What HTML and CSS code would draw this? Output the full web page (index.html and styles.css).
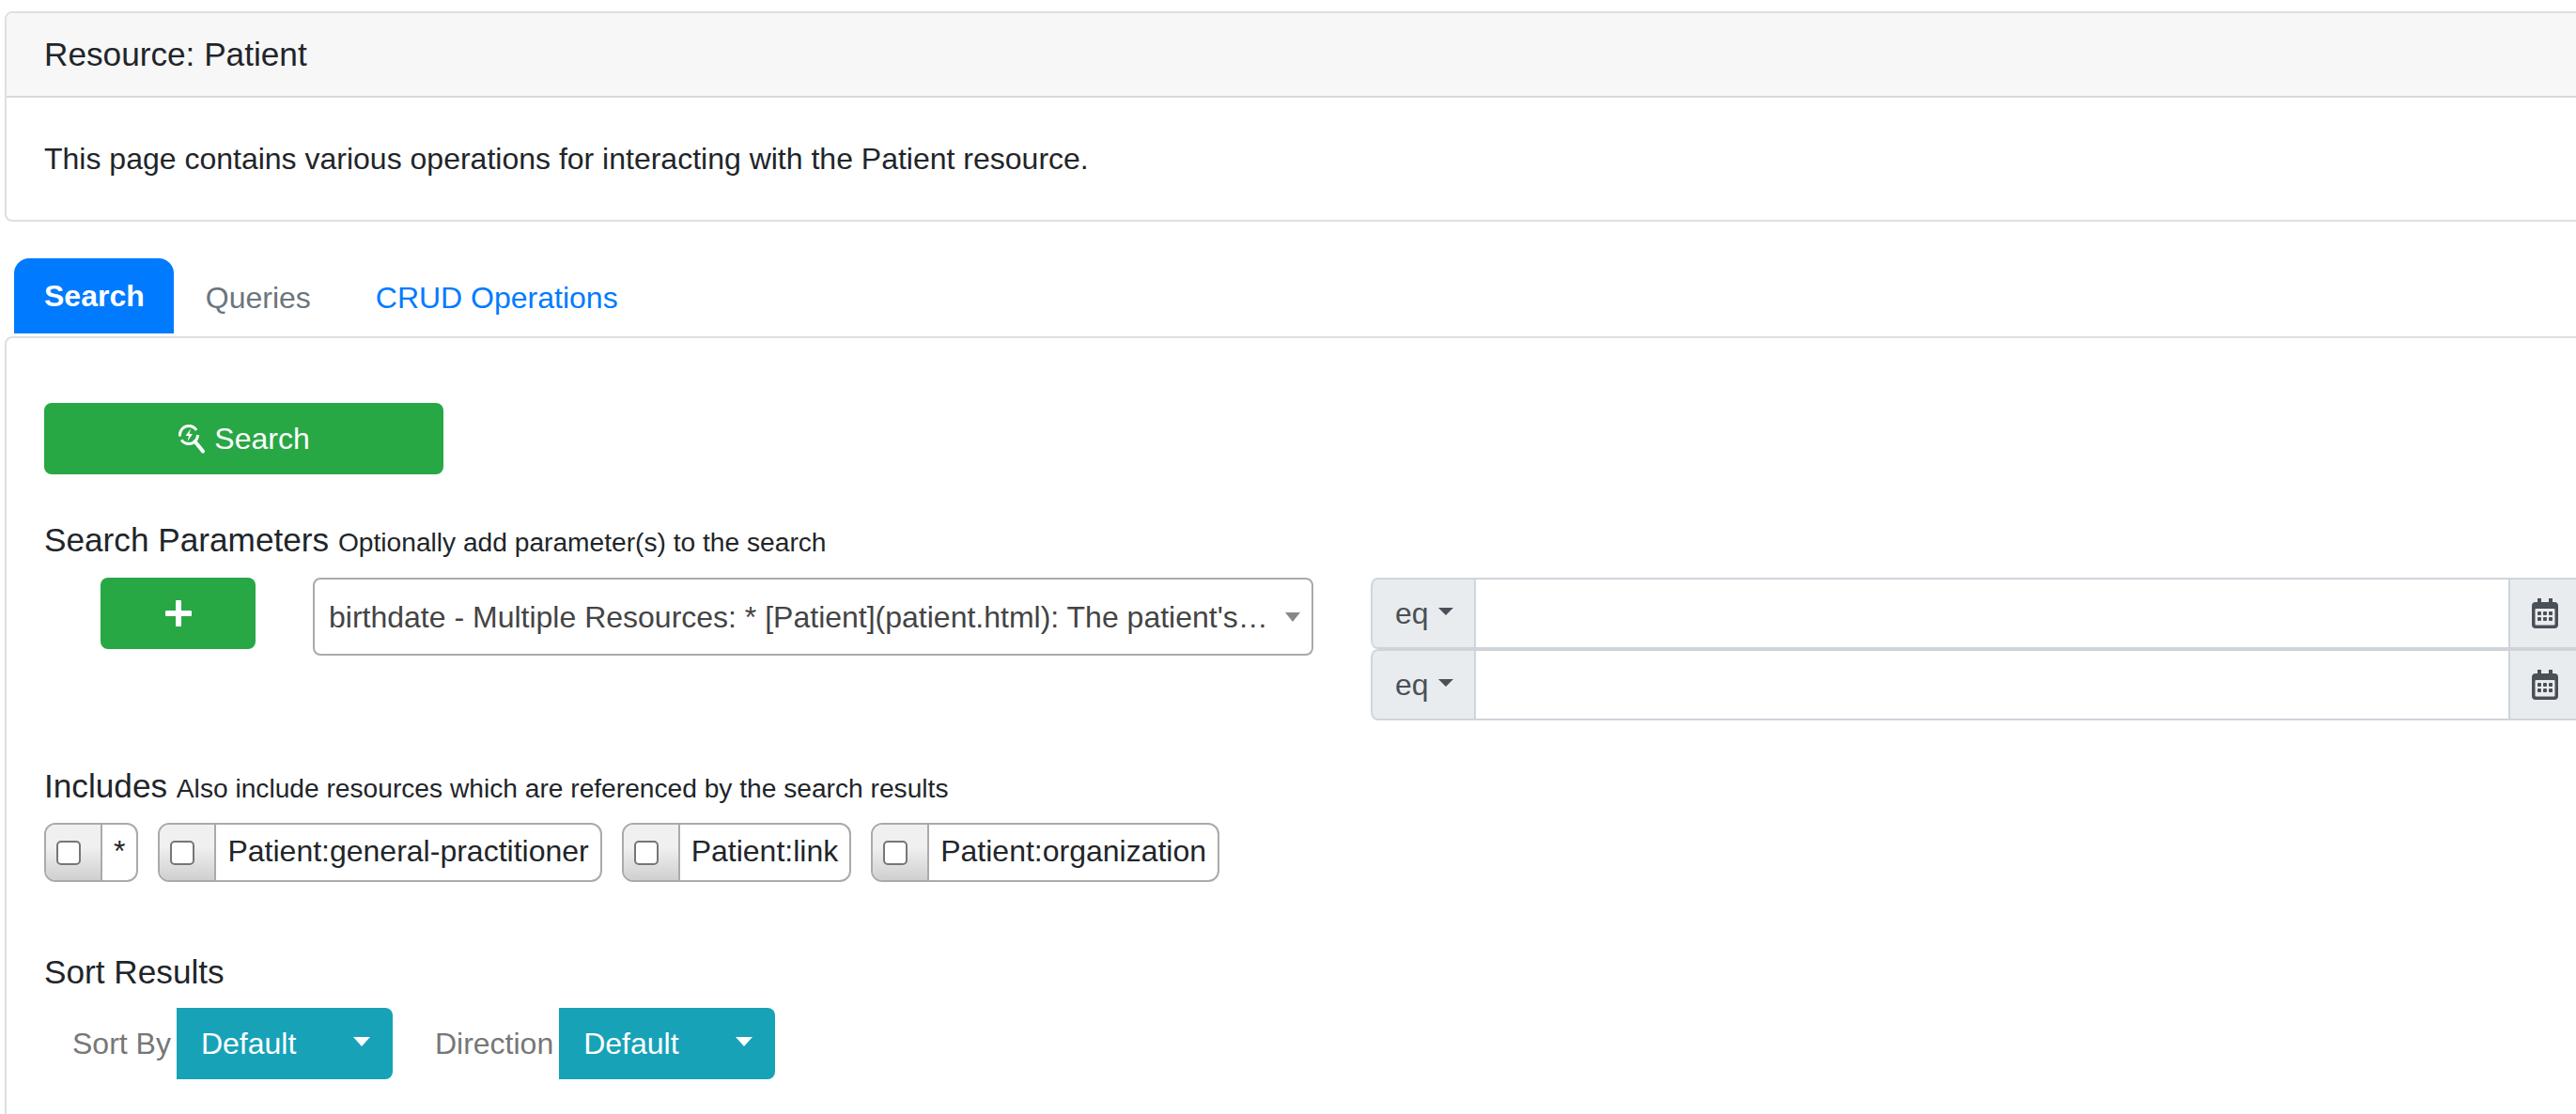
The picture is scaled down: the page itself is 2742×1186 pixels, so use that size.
FILE: index.html
```html
<!DOCTYPE html>
<html lang="en">
  <head>
    <meta charset="UTF-8" />
    <title>Resource: Patient</title>
    <link rel="stylesheet" href="styles.css">
  </head>
  <body>
    <div class="page">
      <div class="card">
        <div class="card-header">Resource: Patient</div>
        <div class="card-body">This page contains various operations for interacting with the Patient resource.</div>
      </div>

      <div class="tabs">
        <a class="tab active" href="#">Search</a>
        <a class="tab muted" href="#">Queries</a>
        <a class="tab" href="#">CRUD Operations</a>
      </div>

      <div class="tab-content">
        <button class="btn btn-search">
          <svg class="search-icon" viewBox="0 0 30 32" width="30" height="32">
            <circle cx="12" cy="12" r="9.5" fill="none" stroke="#fff" stroke-width="3" stroke-dasharray="24 4 26 6"/>
            <path d="M14 5.5 8.5 13h3.5l-1.5 6 5.5-8h-3.5z" fill="#fff"/>
            <path d="M18.500 19 27 29.500" stroke="#fff" stroke-width="4" stroke-linecap="round"/>
          </svg>
          Search
        </button>

        <div class="heading first">Search Parameters <small>Optionally add parameter(s) to the search</small></div>
        <div class="param-row">
          <button class="btn btn-add">
            <svg viewBox="0 0 28 28" width="28" height="28">
              <path d="M14 2v24M2 14h24" stroke="#fff" stroke-width="6" stroke-linecap="round"/>
            </svg>
          </button>
          <div class="select">
            <span class="select-text">birthdate - Multiple Resources: * [Patient](patient.html): The patient's…</span>
            <span class="select-arrow"></span>
          </div>
          <div class="date-groups">
            <div class="date-group">
              <div class="prefix">eq <span class="caret"></span></div>
              <input class="date-input" type="text" />
              <div class="cal">
                <svg viewBox="0 0 28 32" width="28" height="32">
                  <path d="M6 0h4v4h8V0h4v4h2a4 4 0 0 1 4 4v20a4 4 0 0 1-4 4H4a4 4 0 0 1-4-4V8a4 4 0 0 1 4-4h2z" fill="#495057"/>
                  <rect x="3.500" y="11" width="21" height="17.500" rx="1" fill="#e9ecef"/>
                  <g fill="#495057">
                    <rect x="6" y="14" width="4" height="4" rx="1"/><rect x="12" y="14" width="4" height="4" rx="1"/><rect x="18" y="14" width="4" height="4" rx="1"/>
                    <rect x="6" y="20" width="4" height="4" rx="1"/><rect x="12" y="20" width="4" height="4" rx="1"/><rect x="18" y="20" width="4" height="4" rx="1"/>
                  </g>
                </svg>
              </div>
            </div>
            <div class="date-group">
              <div class="prefix">eq <span class="caret"></span></div>
              <input class="date-input" type="text" />
              <div class="cal">
                <svg viewBox="0 0 28 32" width="28" height="32">
                  <path d="M6 0h4v4h8V0h4v4h2a4 4 0 0 1 4 4v20a4 4 0 0 1-4 4H4a4 4 0 0 1-4-4V8a4 4 0 0 1 4-4h2z" fill="#495057"/>
                  <rect x="3.500" y="11" width="21" height="17.500" rx="1" fill="#e9ecef"/>
                  <g fill="#495057">
                    <rect x="6" y="14" width="4" height="4" rx="1"/><rect x="12" y="14" width="4" height="4" rx="1"/><rect x="18" y="14" width="4" height="4" rx="1"/>
                    <rect x="6" y="20" width="4" height="4" rx="1"/><rect x="12" y="20" width="4" height="4" rx="1"/><rect x="18" y="20" width="4" height="4" rx="1"/>
                  </g>
                </svg>
              </div>
            </div>
          </div>
        </div>

        <div class="heading includes">Includes <small>Also include resources which are referenced by the search results</small></div>
        <div class="chips">
          <label class="chip"><span class="chip-check"><input type="checkbox" /></span><span class="chip-label star">*</span></label>
          <label class="chip"><span class="chip-check"><input type="checkbox" /></span><span class="chip-label">Patient:general-practitioner</span></label>
          <label class="chip"><span class="chip-check"><input type="checkbox" /></span><span class="chip-label">Patient:link</span></label>
          <label class="chip"><span class="chip-check"><input type="checkbox" /></span><span class="chip-label">Patient:organization</span></label>
        </div>

        <div class="heading sort">Sort Results</div>
        <div class="sort-row">
          <span class="sort-label">Sort By</span>
          <button class="dropdown">Default <span class="caret white"></span></button>
          <span class="sort-label second">Direction</span>
          <button class="dropdown">Default <span class="caret white"></span></button>
        </div>
      </div>
    </div>
  </body>
</html>
```

FILE: styles.css
```css
html,
body {
  margin: 0;
  height: 1186px;
  overflow: hidden;
  background: #fff;
}
body {
  font-family: "Liberation Sans", Arial, sans-serif;
  font-size: 32px;
  line-height: 48px;
  color: #212529;
}
.page {
  width: 2800px;
  padding: 12px 0 0 5px;
}
.card {
  border: 2px solid #dfdfdf;
  border-radius: 8px;
}
.card-header {
  background: #f7f7f7;
  border-bottom: 2px solid #d9d9d9;
  border-radius: 6px 6px 0 0;
  padding: 20px 40px 20px;
  font-size: 35.2px;
}
.card-body {
  padding: 41px 40px 41px;
  height: 48px;
}
.tabs {
  display: flex;
  margin: 39px 0 0 10px;
  height: 80px;
}
.tab {
  padding: 18px 35px 14px 34px;
  height: 48px;
  color: #007bff;
  text-decoration: none;
}
.tab.active {
  background: #007bff;
  color: #fff;
  font-weight: bold;
  border-radius: 16px 16px 0 0;
  padding: 16px 31px 16px 32px;
  height: 48px;
}
.tab.muted {
  color: #6c757d;
}
.tab-content {
  margin-top: 3px;
  border: 2px solid #dfdfdf;
  border-radius: 8px 8px 0 0;
  padding: 69px 40px 60px;
}
.btn {
  display: flex;
  align-items: center;
  justify-content: center;
  background: #28a745;
  color: #fff;
  border: 0;
  border-radius: 8px;
  font: inherit;
  height: 76px;
  padding: 0;
}
.btn-search {
  width: 425px;
  gap: 9px;
}
.heading {
  height: 48px;
  font-size: 35.2px;
}
.heading small {
  font-size: 28.16px;
}
.heading.first {
  margin-top: 46px;
}
.param-row {
  display: flex;
  align-items: flex-start;
  margin-top: 16px;
  padding-left: 60px;
}
.btn-add {
  width: 165px;
  flex: none;
}
.select {
  display: flex;
  align-items: center;
  flex: none;
  box-sizing: border-box;
  width: 1065px;
  height: 83px;
  margin-left: 61px;
  padding: 0 12px 0 15px;
  border: 2px solid #aaa;
  border-radius: 8px;
  color: #444;
}
.select-text {
  flex: 1;
  white-space: nowrap;
  overflow: hidden;
}
.select-arrow {
  width: 0;
  height: 0;
  border-left: 8px solid transparent;
  border-right: 8px solid transparent;
  border-top: 10px solid #888;
}
.date-groups {
  flex: 1;
  margin-left: 61px;
}
.date-group {
  display: flex;
  box-sizing: border-box;
  height: 76px;
  border: 2px solid #ced4da;
  border-left: 0;
  border-radius: 8px;
}
.prefix {
  display: flex;
  align-items: center;
  box-sizing: border-box;
  width: 112px;
  flex: none;
  padding-left: 24px;
  gap: 4px;
  background: #e9ecef;
  border-left: 2px solid #ced4da;
  border-right: 2px solid #ced4da;
  border-radius: 8px 0 0 8px;
  color: #495057;
}
.caret {
  display: inline-block;
  width: 0;
  height: 0;
  margin-left: 6px;
  border-left: 8px solid transparent;
  border-right: 8px solid transparent;
  border-top: 8px solid #495057;
  transform: translateY(-2px);
}
.caret.white {
  border-left-width: 9px;
  border-right-width: 9px;
  border-top: 10px solid #fff;
}
.date-input {
  flex: none;
  width: 1095px;
  border: 0;
  outline: 0;
}
.cal {
  display: flex;
  align-items: center;
  flex: none;
  width: 130px;
  padding-left: 23px;
  box-sizing: border-box;
  background: #e9ecef;
  border-left: 2px solid #ced4da;
}
.heading.includes {
  margin-top: 46px;
}
.chips {
  display: flex;
  gap: 21px;
  margin-top: 15px;
}
.chip {
  display: flex;
  box-sizing: border-box;
  height: 63px;
  border: 2px solid #aaa;
  border-radius: 12px;
  overflow: hidden;
}
.chip-check {
  display: flex;
  align-items: center;
  box-sizing: border-box;
  width: 60px;
  padding-left: 11px;
  background: linear-gradient(#f0f0f0 40%, #cfcfcf);
  border-right: 2px solid #aaa;
}
.chip-check input {
  appearance: none;
  box-sizing: border-box;
  width: 26px;
  height: 26px;
  margin: 0;
  background: #fff;
  border: 2px solid #767676;
  border-radius: 5px;
}
.chip-label {
  padding: 4px 12px 0 12px;
  white-space: nowrap;
}
.heading.sort {
  margin-top: 72px;
}
.sort-row {
  display: flex;
  align-items: center;
  margin: 14px 0 0 30px;
}
.sort-label {
  color: #777;
  margin-right: 6px;
}
.sort-label.second {
  margin-left: 45px;
}
.dropdown {
  display: flex;
  align-items: center;
  justify-content: space-between;
  box-sizing: border-box;
  width: 230px;
  height: 76px;
  padding: 0 24px 0 26px;
  background: #17a2b8;
  color: #fff;
  border: 0;
  border-radius: 0 8px 8px 0;
  font: inherit;
}
```
